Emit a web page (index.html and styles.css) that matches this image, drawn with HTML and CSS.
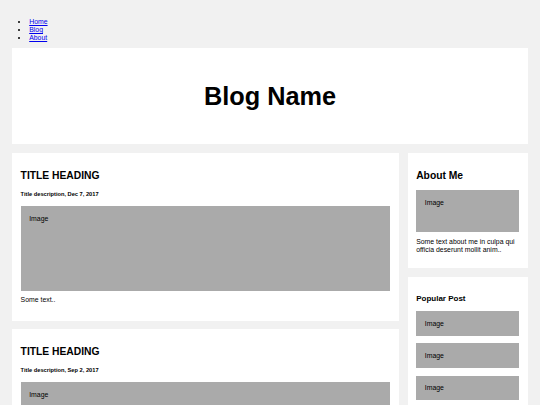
FILE: index.html
```html
<!DOCTYPE html>
<html lang="en">
<head>
    <meta charset="UTF-8">
    <meta name="viewport" content="width=device-width, initial-scale=1.0">
    <title>Blog Name</title>
    <link rel="stylesheet" href="styles.css">
</head>
<body>
    <ul class="nav">
        <li><a href="#">Home</a></li>
        <li><a href="#">Blog</a></li>
        <li><a href="#">About</a></li>
    </ul>

    <div class="header">
        <h1>Blog Name</h1>
    </div>

    <div class="row">
        <div class="leftcolumn">
            <div class="card">
                <h2>TITLE HEADING</h2>
                <h5>Title description, Dec 7, 2017</h5>
                <div class="fakeimg big">Image</div>
                <p>Some text..</p>
            </div>
            <div class="card">
                <h2>TITLE HEADING</h2>
                <h5>Title description, Sep 2, 2017</h5>
                <div class="fakeimg big">Image</div>
                <p>Some text..</p>
            </div>
        </div>

        <div class="rightcolumn">
            <div class="card">
                <h2>About Me</h2>
                <div class="fakeimg medium">Image</div>
                <p>Some text about me in culpa qui officia deserunt mollit anim..</p>
            </div>
            <div class="card">
                <h3>Popular Post</h3>
                <div class="fakeimg small">Image</div>
                <div class="fakeimg small">Image</div>
                <div class="fakeimg small">Image</div>
            </div>
        </div>
    </div>
</body>
</html>
```

FILE: styles.css
```css
* {
    box-sizing: border-box;
}

body {
    margin: 0;
    padding: 12px;
    font-family: "Liberation Sans", Arial, sans-serif;
    background: #f1f1f1;
    color: #000;
}

.nav {
    margin: 6px 0;
    padding-left: 17.2px;
    font-size: 6.9px;
    line-height: 8px;
}

.nav a {
    color: #0000ee;
}

.header {
    background: white;
    height: 96px;
    display: flex;
    align-items: center;
    justify-content: center;
}

.header h1 {
    margin: 0;
    font-size: 25.3px;
}

.row {
    display: grid;
    grid-template-columns: 75% 1fr;
    column-gap: 8.6px;
    margin-top: 9px;
}

.leftcolumn,
.rightcolumn {
    display: flex;
    flex-direction: column;
    gap: 8.4px;
}

.card {
    background: white;
    padding: 8.6px;
}

.card h2 {
    margin: 8.4px 0 0;
    font-size: 10.3px;
    line-height: 12px;
}

.card h5 {
    margin: 9px 0 8px;
    font-size: 5.7px;
    line-height: 7px;
}

.card h3 {
    margin: 9px 0 7.7px;
    font-size: 8px;
    line-height: 9.2px;
}

.card p {
    margin: 5px 0 8.4px;
    font-size: 6.9px;
    line-height: 8px;
}

.rightcolumn .card h2 {
    margin-bottom: 8px;
}

.rightcolumn .card p {
    margin: 6px 0 6.4px;
    line-height: 7.7px;
}

.fakeimg {
    background: #aaa;
    padding: 8.6px;
    font-size: 6.9px;
    line-height: 8px;
}

.fakeimg.big {
    height: 85px;
}

.fakeimg.medium {
    height: 42px;
}

.fakeimg.small {
    height: 24.5px;
    padding-top: 8.25px;
    margin-bottom: 7.7px;
}
```
